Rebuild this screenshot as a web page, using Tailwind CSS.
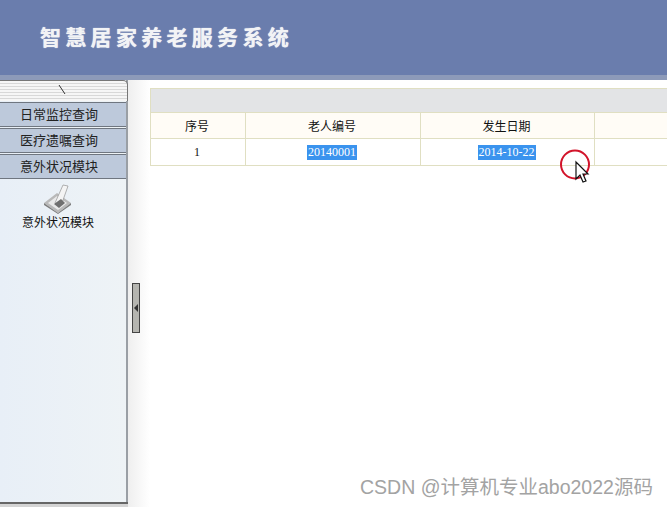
<!DOCTYPE html>
<html lang="zh-CN">
  <head>
    <meta charset="UTF-8" />
    <title>智慧居家养老服务系统</title>
    <script src="https://cdn.jsdelivr.net/npm/@tailwindcss/browser@4"></script>
  </head>
  <body class="bg-white">
    <div class="relative w-[667px] h-[507px] overflow-hidden flex flex-col font-['Liberation_Serif','Noto_Sans_CJK_SC',serif] text-[12px] text-[#111]">
      <!-- header -->
      <header class="h-[80px] shrink-0 bg-[#6a7dad] border-b-[5px] border-[#8d9ab9] flex items-center pl-[40px] pb-[3px]">
        <h1 class="font-['Noto_Sans_CJK_SC',sans-serif] font-bold text-[21px] tracking-[4.3px] leading-none text-[#f2f3f5] [text-shadow:0_0_1px_#ffffff]">智慧居家养老服务系统</h1>
      </header>

      <div class="flex flex-1 min-h-0">
        <!-- sidebar -->
        <aside class="w-[128px] shrink-0 flex flex-col bg-gradient-to-r from-[#e8eff7] to-[#eef3f6] border-r-2 border-[#9a9fa5] font-['Noto_Sans_CJK_SC',sans-serif]">
          <div class="relative h-[21px] shrink-0 rounded-tr-[5px] border-t border-r border-[#777] bg-[repeating-linear-gradient(to_bottom,#f6f6f6_0,#f6f6f6_2px,#d8d8d8_2px,#d8d8d8_3px)] mr-[-2px]">
            <svg class="absolute left-[58px] top-[3px]" width="9" height="12" viewBox="0 0 9 12"><path d="M1 1l6 9" stroke="#333" stroke-width="1" fill="none" /></svg>
          </div>
          <nav class="flex flex-col gap-[1px] pt-[1px] text-[13px] text-[#222] text-center">
            <a class="h-[25px] leading-[21px] pr-[8px] bg-[#bdc9db] border-y border-[#6f7680]">日常监控查询</a>
            <a class="h-[25px] leading-[21px] pr-[8px] bg-[#bdc9db] border-y border-[#6f7680]">医疗遗嘱查询</a>
            <a class="h-[25px] leading-[21px] pr-[8px] bg-[#bdc9db] border-y border-[#6f7680]">意外状况模块</a>
          </nav>
          <div class="flex flex-col items-center pt-[4px] pr-[10px] text-[12px] text-[#111] leading-[15px]">
            <svg class="block" width="32" height="31" viewBox="0 0 32 31">
              <path d="M2 20 L15 10 L29 20 L16 30 Z" fill="#b9b9b9" />
              <path d="M6 20 L15 13 L25 20 L16 27 Z" fill="#e9e9e9" />
              <path d="M16 30 L29 20 L29 22 L16 31 L2 22 L2 20 Z" fill="#7d7d7d" />
              <path d="M13 20 L21 2 L26 3 L20 20 L17 24 Z" fill="#f4f4f4" stroke="#999" stroke-width="0.75" />
              <path d="M12 21 L19 16 L23 20 L17 25 Z" fill="#6f6f6f" />
            </svg>
            <span>意外状况模块</span>
          </div>
          <div class="mt-auto h-[5px] shrink-0 mr-[-2px] border-t-2 border-[#666] bg-[#d4d4d4]"></div>
        </aside>

        <!-- splitter -->
        <div class="w-[22px] shrink-0 flex items-start pl-[4px] pt-[203px] bg-gradient-to-r from-[#efefef] to-white">
          <div class="w-[8px] h-[50px] bg-[#b5b5b0] border border-[#444] flex items-center justify-center">
            <svg width="4" height="8" viewBox="0 0 4 8"><path d="M4 0v8L0 4z" fill="#333" /></svg>
          </div>
        </div>

        <!-- main -->
        <main class="flex-1 min-w-0 pt-[8px]">
          <table class="w-[540px] table-fixed border-collapse border border-[#e0dfc2]">
            <colgroup>
              <col class="w-[95px]" />
              <col class="w-[175px]" />
              <col class="w-[174px]" />
              <col />
            </colgroup>
            <thead>
              <tr class="h-[24px] bg-[#e3e4e6]"><th colspan="4"></th></tr>
              <tr class="h-[26px] bg-[#fffcf6] font-['Noto_Sans_CJK_SC',sans-serif] text-[12px] text-center">
                <td class="pr-[2px] border border-[#e0dfc2]">序号</td>
                <td class="pr-[2px] border border-[#e0dfc2]">老人编号</td>
                <td class="pr-[2px] border border-[#e0dfc2]">发生日期</td>
                <td class="border border-[#e0dfc2]"></td>
              </tr>
            </thead>
            <tbody>
              <tr class="h-[27px] text-center">
                <td class="pr-[2px] border border-[#e0dfc2]">1</td>
                <td class="pr-[2px] border border-[#e0dfc2]"><span class="inline-block px-px leading-[15px] bg-[#3a93ee] text-white">20140001</span></td>
                <td class="pr-[2px] border border-[#e0dfc2]"><span class="inline-block px-px leading-[15px] bg-[#3a93ee] text-white">2014-10-22</span></td>
                <td class="border border-[#e0dfc2]"></td>
              </tr>
            </tbody>
          </table>
        </main>
      </div>

      <!-- mouse pointer highlight -->
      <svg class="absolute left-[558px] top-[147px]" width="36" height="40" viewBox="0 0 36 40">
        <circle cx="17" cy="17.500" r="14" fill="none" stroke="#d2142a" stroke-width="2" />
        <path d="M18 15 V32 L22 28 L25 35 L28 34 L25 27 L30 27 Z" fill="#fff" stroke="#111" stroke-width="1.200" />
      </svg>

      <!-- watermark -->
      <div class="absolute left-[360px] top-[475px] font-['Liberation_Sans','Noto_Sans_CJK_SC',sans-serif] text-[19.500px] leading-[24px] text-[#a3a3a3] whitespace-nowrap">CSDN @计算机专业abo2022源码</div>
    </div>
  </body>
</html>
